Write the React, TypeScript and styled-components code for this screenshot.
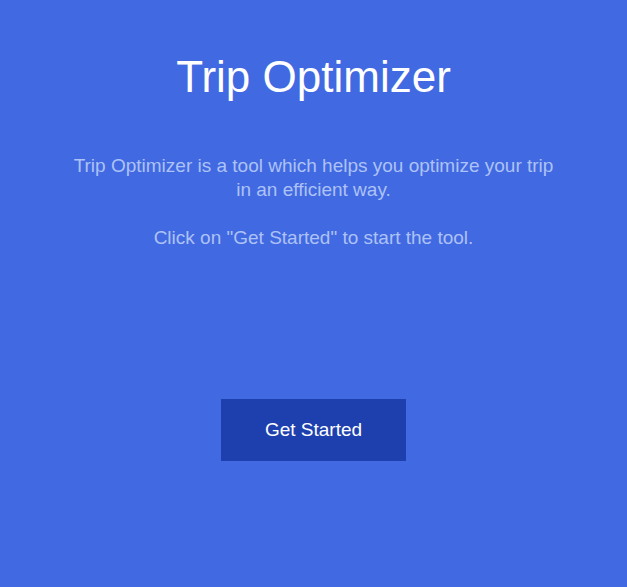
import React from "react";
import styled, { createGlobalStyle } from "styled-components";

const Global = createGlobalStyle`
  html, body { margin: 0; padding: 0; background: #4169e1; }
  body { font-family: "Liberation Sans", Arial, sans-serif; }
`;

const Page = styled.main`
  min-height: 587px;
  background: #4169e1;
  display: flex;
  flex-direction: column;
  align-items: center;
  padding-top: 52px;
  box-sizing: border-box;
`;

const Title = styled.h1`
  margin: 0;
  font-size: 44px;
  font-weight: 400;
  line-height: 50px;
  color: #ffffff;
`;

const Text = styled.p<{ $gap?: number }>`
  margin: ${(p) => p.$gap ?? 0}px 0 0;
  width: 490px;
  text-align: center;
  font-size: 19px;
  line-height: 24px;
  color: #adc2f6;
`;

const Button = styled.button`
  margin-top: 149px;
  width: 185px;
  height: 62px;
  border: none;
  background: #1e40af;
  color: #ffffff;
  font-family: "Liberation Sans", Arial, sans-serif;
  font-size: 19px;
  cursor: pointer;
`;

export default function App() {
  return (
    <>
      <Global />
      <Page>
        <Title>Trip Optimizer</Title>
        <Text $gap={52}>
          Trip Optimizer is a tool which helps you optimize your trip in an efficient way.
        </Text>
        <Text $gap={24}>Click on "Get Started" to start the tool.</Text>
        <Button>Get Started</Button>
      </Page>
    </>
  );
}
